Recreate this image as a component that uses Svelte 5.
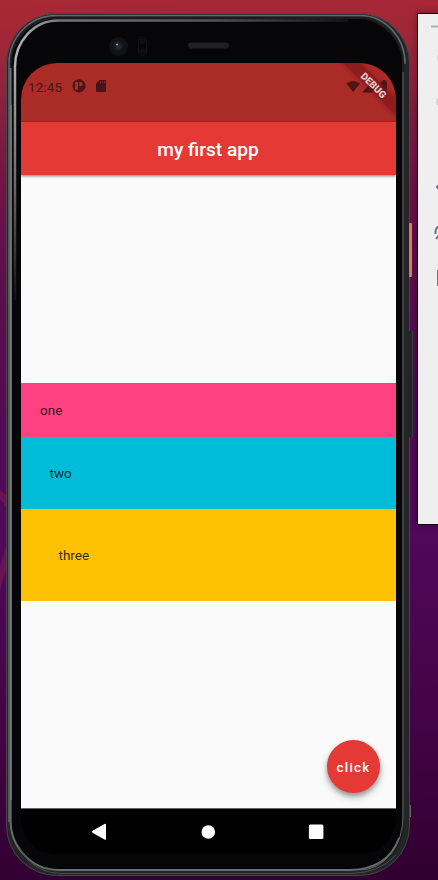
<script>
  const rows = [
    { label: 'one', cls: 'pink' },
    { label: 'two', cls: 'cyan' },
    { label: 'three', cls: 'amber' }
  ];
</script>

<main class="desktop">
  <svg class="wallpaper" viewBox="0 0 438 880" fill="none" stroke="#6b1253" stroke-width="7">
    <path d="M-5 491Q12 501 16 527Q8 553 -3 588" />
  </svg>

  <div class="side-key power"></div>
  <div class="side-key volume"></div>
  <div class="side-key notch"></div>

  <section class="phone">
    <svg class="frame" viewBox="0 0 438 880" fill="none">
      <defs>
        <linearGradient id="shine" x1="20" y1="70" x2="350" y2="20" gradientUnits="userSpaceOnUse">
          <stop offset="0" stop-color="#b4b4b1" />
          <stop offset=".14" stop-color="#777" />
          <stop offset=".6" stop-color="#555" />
          <stop offset="1" stop-color="#151515" />
        </linearGradient>
        <linearGradient id="edge" x1="0" y1="60" x2="0" y2="300" gradientUnits="userSpaceOnUse">
          <stop offset="0" stop-color="#b0b0ad" />
          <stop offset=".5" stop-color="#6c6d6d" />
          <stop offset="1" stop-color="#101112" />
        </linearGradient>
      </defs>
      <rect x="6.500" y="13.500" width="403" height="862" rx="50" fill="#242527" stroke="#454648" />
      <path d="M9 822V64A47 48 0 0 1 56 15.500H360A45 48 0 0 1 405 64" stroke="#66676c" stroke-width="1.500" />
      <rect x="11" y="18" width="392" height="852" rx="46" fill="#060608" stroke="#1c1d1f" stroke-width="2" />
      <path d="M15 67A43 46 0 0 1 58 20.500H348" stroke="url(#shine)" stroke-width="2.500" />
      <path d="M13.750 67H16.250V300H13.750Z" fill="url(#edge)" />
      <path d="M10.500 68V820A48 50 0 0 0 58 870H350Q388 869 399 838" stroke="#696c6e" stroke-width="2" />
      <path d="M11 105V800" stroke="#777a7c" stroke-width="1.500" />
      <path d="M403 72V815A43 53 0 0 1 360 870" stroke="#626466" />
      <path d="M18 845Q31 872 60 873.500H350Q380 873 396 855" stroke="#4b4d4e" />
      <circle cx="118.500" cy="46.500" r="9.500" fill="#111214" />
      <circle cx="118" cy="46" r="5" fill="#181b21" />
      <circle cx="118.500" cy="47" r="2.500" fill="#252b3b" />
      <circle cx="117" cy="44.500" r="1" fill="#a2a8b0" />
      <rect x="138.500" y="36.500" width="8" height="19" rx="4" stroke="#131416" />
      <circle cx="142.500" cy="41" r="3" fill="#0d0e10" />
      <circle cx="142.500" cy="51" r="3" fill="#0d0e10" />
      <rect x="188" y="42.500" width="41" height="6" rx="3" fill="#202022" />
    </svg>

    <div class="screen">
      <header class="status">
        <span class="clock">12:45</span>
        <svg class="notification" viewBox="0 0 14 14">
          <path fill="#4a1517" fill-rule="evenodd" d="M7 .2A6.600 6.600 0 1 0 7 13.400A6.600 6.600 0 1 0 7 .2ZM3 3V9.800Q3 10.700 4 10.700H6V3ZM7.200 3V7H9Q10.700 7 10.700 5Q10.700 3 9 3Z" />
        </svg>
        <svg class="card" viewBox="0 0 10 12"><path d="M3.500 0H9Q10 0 10 1V11Q10 12 9 12H1Q0 12 0 11V3.500Z" fill="#481417" /><path d="M4.500 1.500V3M6.500 1.500V3M8.500 1.500V3" stroke="#92272a" /></svg>
        <svg class="signals" viewBox="0 0 44 14" fill="#4d1517">
          <path d="M.5 3.500Q7-1.500 14 3.500L7.200 12Z" />
          <path d="M16 12.500L27 1V12.500Z" />
          <path d="M34.500 1.500H36.500V0H39.500V1.500H41V12.500H34.500Z" />
        </svg>
      </header>

      <div class="appbar"><h1>my first app</h1></div>
      <div class="content">
        {#each rows as row}
          <div class="row {row.cls}">{row.label}</div>
        {/each}
      </div>
      <nav>
        <svg viewBox="0 0 375 46" fill="#fff">
          <path d="M71.500 21.800Q70.500 22.800 71.500 23.800L83.500 30.600Q85 31.300 85 29.800V15.800Q85 14.300 83.500 15.100Z" />
          <circle cx="187.300" cy="23" r="6.800" />
          <rect x="287.900" y="15.600" width="14.500" height="14.500" rx="1.500" />
        </svg>
      </nav>
      <button>click</button>
      <div class="debug"><span>DEBUG</span></div>
    </div>
  </section>

  <aside>
    <svg viewBox="0 0 20 280" fill="none" stroke="#607d8b" stroke-width="2">
      <path d="M13 12.500H20" stroke="#a5b4bc" />
      <path d="M22 39A3.500 5 0 0 0 22 48" stroke="#d2d2d2" />
      <path d="M19.500 85V91" stroke="#cfcfcf" />
      <path d="M22 170L19 173L22 176" />
      <path d="M17.500 220Q17 214 21 212.500M18 225L21 221" />
      <path d="M20 256V272" />
    </svg>
  </aside>
</main>

<style>
  :global(body) { margin: 0; }
  .desktop {
    position: relative;
    width: 438px;
    height: 880px;
    overflow: hidden;
    font-family: Roboto, sans-serif;
    background: linear-gradient(178deg, #a92834 0, #a02737 5%, #84203f 13%, #701445 21%, #600e4c 30%, #540a55 45%, #50085a 61%, #430344 83%, #300030 100%);
  }
  .wallpaper, .frame { position: absolute; inset: 0; width: 438px; height: 880px; }
  .phone { position: absolute; inset: 0; }
  .side-key { position: absolute; z-index: 1; }
  .power { left: 409px; top: 223px; width: 3px; height: 54px; background: #d97963; border-radius: 0 1px 1px 0; }
  .volume { left: 409px; top: 331px; width: 4px; height: 106px; background: #242526; border-right: 1px solid #383b3b; box-sizing: border-box; }
  .notch { left: 410px; top: 805px; width: 1px; height: 12px; background: #686868; }
  .screen {
    position: absolute;
    left: 21px;
    top: 63px;
    width: 375px;
    height: 791px;
    border-radius: 36px;
    overflow: hidden;
    background: #000;
    display: flex;
    flex-direction: column;
  }
  .status {
    height: 59px;
    flex: none;
    box-sizing: border-box;
    background: #ab2b27;
    padding: 16px 7px 0;
    display: flex;
    align-items: flex-start;
    color: #491416;
  }
  .clock { width: 44px; font-size: 13.500px; line-height: 16px; letter-spacing: .1px; }
  .notification { width: 14px; height: 14px; }
  .card { width: 10px; height: 12px; margin: 1px 0 0 10px; }
  .signals { width: 44px; height: 14px; margin: 1px -1px 0 auto; }
  .appbar {
    position: relative;
    z-index: 1;
    height: 53px;
    flex: none;
    display: flex;
    align-items: center;
    justify-content: center;
    background: #e53935;
    box-shadow: 0 1px 3px #0008;
  }
  h1 { margin: 3px 1px 0 0; color: #fff; font-size: 19.100px; line-height: 24px; font-weight: 500; letter-spacing: 0; }
  .content {
    height: 633px;
    flex: none;
    box-sizing: border-box;
    padding-top: 208px;
    background: #fafafa;
  }
  .row { display: flex; align-items: center; box-sizing: border-box; font-size: 13.500px; color: #000c; }
  .pink { height: 54px; padding-left: 19px; background: #ff4081; }
  .cyan { height: 72px; padding-left: 28.500px; background: #00bcd8; }
  .amber { height: 92px; padding-left: 37.500px; background: #ffc103; }
  nav { height: 46px; flex: none; background: #000; border-top: 1px solid #666; box-sizing: border-box; }
  nav svg { display: block; width: 375px; height: 46px; }
  button {
    position: absolute;
    left: 306px;
    top: 677px;
    width: 53px;
    height: 53px;
    padding: 0;
    border: 0;
    border-radius: 50%;
    background: #e53935;
    color: #fff;
    font: 500 13.500px Roboto, sans-serif;
    letter-spacing: 1.150px;
    box-shadow: 0 3px 5px #0005, 0 5px 10px #0002;
  }
  .debug {
    position: absolute;
    left: 307.500px;
    top: 16px;
    width: 90px;
    height: 12px;
    display: flex;
    align-items: center;
    justify-content: center;
    background: #7b121799;
    box-shadow: 0 0 5px #65101477;
    color: #e1cacb;
    font-size: 9.900px;
    font-weight: 900;
    transform: rotate(45deg);
  }
  aside {
    position: absolute;
    left: 417px;
    top: 13px;
    width: 30px;
    height: 510px;
    background: #efefef;
    border: 1px solid #000;
    box-shadow: 0 0 8px #0005;
  }
  aside svg { display: block; width: 20px; height: 280px; }
</style>
